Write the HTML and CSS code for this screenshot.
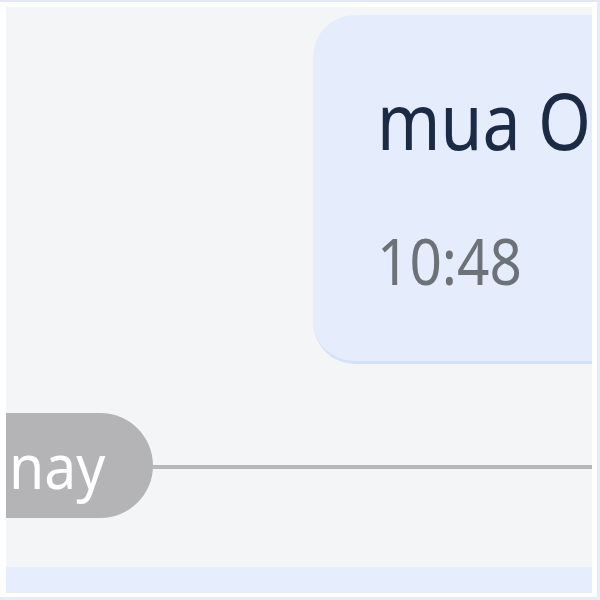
FILE: index.html
```html
<!doctype html>
<html>
  <head>
    <meta charset="utf-8" />
    <link rel="stylesheet" href="styles.css">
  </head>
  <body>
    <div class="window">
      <div class="chat">
        <div class="message-row">
          <div class="bubble">
            <div class="bubble-text">mua OK</div>
            <div class="bubble-time">10:48</div>
          </div>
        </div>

        <div class="date-divider">
          <div class="date-pill"><span class="date-label">Hôm nay</span></div>
          <div class="date-line"></div>
        </div>
      </div>
      <div class="composer"></div>
    </div>
  </body>
</html>
```

FILE: styles.css
```css
* {
  margin: 0;
  padding: 0;
  box-sizing: border-box;
}

body {
  width: 600px;
  height: 600px;
  overflow: hidden;
  background: #ffffff;
  font-family: 'Noto Sans', 'Open Sans', sans-serif;
}

.window {
  width: 600px;
  height: 600px;
  border-top: 2px solid #e2e8f8;
  border-right: 3px solid #e4ecfb;
  border-bottom: 3px solid #e4ecfb;
  padding: 5px 5px 4px 6px;
  display: flex;
  flex-direction: column;
  overflow: hidden;
}

.chat {
  flex: 1;
  background: #f4f5f7;
  display: flex;
  flex-direction: column;
  overflow: hidden;
  padding-top: 8px;
}

.message-row {
  display: flex;
  padding-left: 307px;
}

.bubble {
  flex-shrink: 0;
  width: 520px;
  height: 349px;
  background: #e5edfd;
  border-radius: 42px;
  border-bottom: 3px solid #d3e2f9;
  padding: 66px 0 0 64px;
}

.bubble-text {
  font-size: 78px;
  line-height: 1;
  color: #1b2a45;
  white-space: nowrap;
  transform: scaleX(0.87);
  transform-origin: left center;
}

.bubble-time {
  margin-top: 70px;
  font-size: 63px;
  line-height: 1;
  color: #6d7278;
  transform: scaleX(0.9);
  transform-origin: left center;
}

.date-divider {
  display: flex;
  align-items: center;
  margin-top: 49px;
  margin-left: -220px;
}

.date-pill {
  flex-shrink: 0;
  width: 367px;
  height: 105px;
  padding-right: 48px;
  border-radius: 53px;
  background: #b4b4b6;
  color: #ffffff;
  font-size: 62px;
  line-height: 105px;
  white-space: nowrap;
  text-align: right;
}

.date-label {
  display: inline-block;
  transform: scaleX(0.92);
  transform-origin: right center;
}

.date-line {
  flex: 1;
  height: 4px;
  background: #b8b8ba;
  margin-top: 2px;
}

.composer {
  height: 26px;
  background: #e6eefd;
  flex-shrink: 0;
}
```
